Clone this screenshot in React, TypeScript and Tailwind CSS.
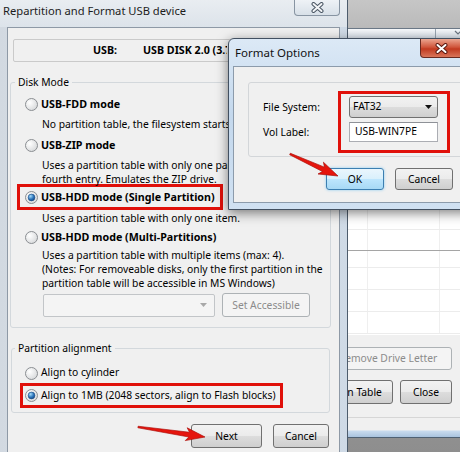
import { useId, type ReactNode } from "react";

const FONT = "font-['Noto_Sans','DejaVu_Sans',sans-serif]";

function useSvgId() {
  return useId().replace(/[^a-zA-Z0-9_-]/g, "");
}

function Radio({ checked = false }: { checked?: boolean }) {
  const id = useSvgId();
  return (
    <svg width="13" height="13" viewBox="0 0 13 13" className="shrink-0">
      <defs>
        <radialGradient id={`${id}b`} cx="0.35" cy="0.35" r="0.8">
          <stop offset="0" stopColor="#ffffff" />
          <stop offset="1" stopColor="#d2d4d6" />
        </radialGradient>
        <radialGradient id={`${id}d`} cx="0.35" cy="0.3" r="0.85">
          <stop offset="0" stopColor="#a6dcfa" />
          <stop offset="0.55" stopColor="#2b74ba" />
          <stop offset="1" stopColor="#0e3a70" />
        </radialGradient>
      </defs>
      <circle cx="6.5" cy="6.5" r="6" fill={`url(#${id}b)`} stroke="#8b8e92" />
      {checked && (
        <circle cx="6.5" cy="6.5" r="3.4" fill={`url(#${id}d)`} stroke="#1a4a84" strokeWidth="0.6" />
      )}
    </svg>
  );
}

interface WinButtonProps {
  children: ReactNode;
  className?: string;
  focused?: boolean;
  disabled?: boolean;
}

function WinButton({ children, className = "", focused, disabled }: WinButtonProps) {
  const look = disabled
    ? "border-[#adb2b5] bg-[#f4f4f4] text-[#8c8c8c]"
    : focused
      ? "border-[#3c7fb1] bg-[linear-gradient(#eaf6fd,#d9f0fc_50%,#bee6fd_50%,#a7d9f5)] shadow-[0_0_3px_#8ccbf0]"
      : "border-[#707070] bg-[linear-gradient(#f2f2f2,#ebebeb_50%,#dddddd_50%,#cfcfcf)]";
  return (
    <button
      type="button"
      className={`flex shrink-0 items-center justify-center whitespace-nowrap rounded-[3px] border leading-none ${look} ${className}`}
    >
      {children}
    </button>
  );
}

function CloseX({ red }: { red?: boolean }) {
  return (
    <svg width="13" height="11" viewBox="0 0 13 11">
      <path d="M2.5 2 L10.5 9 M10.5 2 L2.5 9" stroke={red ? "#5a1a12" : "#4a5664"} strokeWidth="4" strokeLinecap="round" />
      <path d="M2.5 2 L10.5 9 M10.5 2 L2.5 9" stroke={red ? "#ffffff" : "#f2f4f6"} strokeWidth="2" strokeLinecap="round" />
    </svg>
  );
}

function RedArrow({ className, x, y, dx, dy }: { className: string; x: number; y: number; dx: number; dy: number }) {
  const len = Math.hypot(dx, dy);
  const angle = (Math.atan2(dy, dx) * 180) / Math.PI;
  const pts = `0,-0.8 ${len - 16},-2.4 ${len - 19},-6.5 ${len},0 ${len - 19},6.5 ${len - 16},2.4 0,0.8`;
  return (
    <svg className={`pointer-events-none absolute ${className}`} viewBox="0 0 80 36" width="80" height="36">
      <polygon points={pts} transform={`translate(${x} ${y}) rotate(${angle})`} fill="#e5150d" stroke="#a80a05" strokeWidth="0.6" />
    </svg>
  );
}

function RadioRow({ label, checked, bold = true, className = "" }: { label: string; checked?: boolean; bold?: boolean; className?: string }) {
  return (
    <div className={`flex h-[20px] items-center gap-[3px] whitespace-nowrap ${className}`}>
      <Radio checked={checked} />
      <span className={bold ? "text-[10.7px] font-bold" : ""}>{label}</span>
    </div>
  );
}

// lines that run under the Format Options window are cut at its left edge
function Desc({ lines, className = "", clip }: { lines: string[]; className?: string; clip?: boolean }) {
  return (
    <div className={`ml-[31px] whitespace-nowrap leading-[14px] ${clip ? "w-[186px] overflow-hidden" : ""} ${className}`}>
      {lines.map((l) => (
        <div key={l}>{l}</div>
      ))}
    </div>
  );
}

function MainDialog() {
  return (
    <div className="absolute left-0 top-0 flex h-[480px] w-[348px] flex-col border-r border-[#4d5c6c] bg-[linear-gradient(90deg,#d2d9e1,#e2e8ee_45%,#cfdae6)]">
      <div className="flex h-[27px] shrink-0 items-start justify-between bg-[linear-gradient(#e9edf1,#dce3ea)]">
        <div className="pl-[3px] pt-[3px] text-[11.2px] leading-[16px] text-[#1c1c1c]">Repartition and Format USB device</div>
        <div className="mr-[7px] flex h-[16px] w-[46px] items-center justify-center rounded-b-[4px] border border-t-0 border-[#8794a2] bg-[linear-gradient(#eef2f6,#d8e0e8)]">
          <CloseX />
        </div>
      </div>
      <div className="flex-1 px-[7px]">
        <div className="flex h-full flex-col overflow-hidden border border-b-0 border-[#8e99a6] bg-[#f0f0f0]">
          <div className="ml-[5px] mt-[11px] flex h-[23px] w-[320px] shrink-0 items-center whitespace-nowrap rounded-[2px] border border-[#cacaca] text-[10.7px] font-bold">
            <span className="ml-[79px] w-[50px]">USB:</span>
            <span className="w-[84px] overflow-hidden">USB DISK 2.0 (3.75 GB)</span>
          </div>

          <fieldset className="ml-[2px] mt-[13px] w-[321px] shrink-0 rounded-[3px] border border-[#d3d8dc] pb-[10px]">
            <legend className="ml-[4px] px-[3px] leading-[14px]">Disk Mode</legend>
            <RadioRow className="ml-[14px] mt-[5px]" label="USB-FDD mode" />
            <Desc clip className="mt-[3px]" lines={["No partition table, the filesystem starts at the first sector."]} />
            <RadioRow className="ml-[14px] mt-[4px]" label="USB-ZIP mode" />
            <Desc
              clip
              className="mt-[3px]"
              lines={["Uses a partition table with only one partition item in the", "fourth entry. Emulates the ZIP drive."]}
            />
            <div className="-mt-[2px] ml-[6px] flex h-[26px] w-[206px] items-center gap-[3px] whitespace-nowrap border-[3px] border-[#e0100a] pl-[5px]">
              <Radio checked />
              <span className="text-[10.7px] font-bold">USB-HDD mode (Single Partition)</span>
            </div>
            <Desc className="mt-[1px]" lines={["Uses a partition table with only one item."]} />
            <RadioRow className="ml-[14px] mt-[2px]" label="USB-HDD mode (Multi-Partitions)" />
            <Desc
              className="mt-[1px]"
              lines={[
                "Uses a partition table with multiple items (max: 4).",
                "(Notes: For removeable disks, only the first partition in the",
                "partition table will be accessible in MS Windows)",
              ]}
            />
            <div className="ml-[32px] mt-[3px] flex items-center gap-[7px]">
              <div className="flex h-[23px] w-[172px] items-center justify-end rounded-[2px] border border-[#c2c5c8] bg-[#f4f4f4] pr-[7px]">
                <svg width="7" height="4" viewBox="0 0 7 4">
                  <path d="M0 0 H7 L3.5 4 Z" fill="#a8a8a8" />
                </svg>
              </div>
              <WinButton disabled className="h-[24px] w-[88px]">Set Accessible</WinButton>
            </div>
          </fieldset>

          <fieldset className="ml-[3px] mt-[13px] w-[319px] shrink-0 rounded-[3px] border border-[#d3d8dc] pb-[4px]">
            <legend className="ml-[3px] px-[3px] leading-[14px]">Partition alignment</legend>
            <RadioRow className="ml-[13px] mt-[8px]" bold={false} label="Align to cylinder" />
            <div className="ml-[8px] flex h-[25px] w-[263px] items-center gap-[3px] whitespace-nowrap border-[3px] border-[#e0100a] pl-[2px]">
              <Radio checked />
              <span>Align to 1MB (2048 sectors, align to Flash blocks)</span>
            </div>
          </fieldset>

          <div className="mt-[11px] flex justify-end gap-[11px] pr-[10px]">
            <WinButton className="h-[24px] w-[71px]">Next</WinButton>
            <WinButton className="h-[24px] w-[56px]">Cancel</WinButton>
          </div>
        </div>
      </div>
    </div>
  );
}

function GridRow({ h, strong }: { h: string; strong?: boolean }) {
  return (
    <div className={`flex shrink-0 border-b ${strong ? "border-[#a5a5a5]" : "border-[#ececec]"} ${h}`}>
      <div className="w-[88px] border-r border-[#efefef]" />
      <div className="w-[72px] border-r border-[#efefef]" />
    </div>
  );
}

function BackWindow() {
  return (
    <div className="absolute left-[280px] top-[28px] flex h-[410px] w-[200px] flex-col border-t border-[#6c7987] bg-[#f0f0f0]">
      <div className="flex h-[9px] shrink-0 bg-[linear-gradient(#f7f9fb,#d9e1ea)]">
        <div className="w-[156px] border-r border-[#98a4b0]" />
        <div className="flex flex-1 justify-center pt-[1px]">
          <svg width="8" height="6" viewBox="0 0 8 6">
            <path d="M1 1 L4 4 L7 1" stroke="#6b7580" strokeWidth="1.2" fill="none" />
          </svg>
        </div>
      </div>
      <div className="flex h-[297px] shrink-0 flex-col bg-white">
        <GridRow h="h-[192px]" />
        <GridRow h="h-[21px]" strong />
        <GridRow h="h-[17px]" />
        <GridRow h="h-[22px]" />
        <GridRow h="h-[22px]" />
        <GridRow h="h-[22px]" />
      </div>
      <WinButton disabled className="ml-[44px] mt-[12px] h-[23px] w-[128px]">Remove Drive Letter</WinButton>
      <div className="ml-[21px] mt-[10px] flex gap-[7px]">
        <WinButton className="h-[24px] w-[92px]">Partition Table</WinButton>
        <WinButton className="h-[24px] w-[52px]">Close</WinButton>
      </div>
      <div className="mt-[13px] flex-1 border-b border-t border-b-[#4f6072] border-t-[#d6d6d6] bg-[linear-gradient(#f0f0f0,#f0f0f0_12px,#c9dbee_13px,#a9c3de)]" />
    </div>
  );
}

function FormatDialog() {
  return (
    <div className="absolute left-[228px] top-[38px] flex h-[172px] w-[250px] flex-col rounded-t-[6px] border border-[#425061] bg-[linear-gradient(180deg,#dce9f6,#c4d8ed_45%,#d0e1f2)] shadow-[0_3px_12px_rgba(0,0,0,0.5)]">
      <div className="flex h-[27px] shrink-0 items-start justify-between">
        <div className="pl-[6px] pt-[6px] text-[11.5px] leading-[16px] text-[#111]">Format Options</div>
        <div className="mr-[14px] flex h-[19px] w-[43px] items-center justify-center rounded-b-[4px] border border-t-0 border-[#6a2a20] bg-[linear-gradient(#eba590,#d0563c_45%,#c13a20_55%,#d9755a)]">
          <CloseX red />
        </div>
      </div>
      <div className="mx-[4px] flex-1 border border-[#8c9bab] bg-[#f0f0f0]">
        <div className="ml-[14px] mt-[15px] flex w-[230px] rounded-[3px] border border-[#d3d6d9] pb-[3px] pt-[8px]">
          <div className="w-[89px] shrink-0 pl-[14px] leading-[14px]">
            <div className="mt-[9px]">File System:</div>
            <div className="mt-[11px]">Vol Label:</div>
          </div>
          <div className="flex h-[62px] w-[112px] shrink-0 flex-col border-[3px] border-[#e0100a] pl-[8px] pt-[2px]">
            <div className="flex h-[22px] w-[89px] items-center justify-between rounded-[3px] border border-[#707070] bg-[linear-gradient(#f2f2f2,#ebebeb_50%,#dddddd_50%,#cfcfcf)] pl-[3px] pr-[5px]">
              <span>FAT32</span>
              <svg width="7" height="4" viewBox="0 0 7 4">
                <path d="M0 0 H7 L3.5 4 Z" fill="#111" />
              </svg>
            </div>
            <div className="mt-[4px] flex h-[20px] w-[89px] items-center border border-[#abadb3] border-t-[#8e9197] bg-white pl-[5px]">
              USB-WIN7PE
            </div>
          </div>
        </div>
        <div className="ml-[92px] mt-[11px] flex gap-[11px]">
          <WinButton focused className="h-[22px] w-[58px]">OK</WinButton>
          <WinButton className="h-[22px] w-[58px]">Cancel</WinButton>
        </div>
      </div>
      <div className="h-[6px] shrink-0" />
    </div>
  );
}

export default function App() {
  return (
    <div
      className={`relative h-[452px] w-[460px] overflow-hidden bg-[linear-gradient(#c6c6c6,#b9b9b9_30px,#8e8e8e_452px)] text-[10.3px] text-black ${FONT}`}
    >
      <BackWindow />
      <MainDialog />
      <FormatDialog />
      <RedArrow className="left-[284px] top-[148px]" x={6} y={6} dx={48} dy={22} />
      <RedArrow className="left-[132px] top-[418px]" x={6} y={9} dx={67} dy={10} />
    </div>
  );
}
